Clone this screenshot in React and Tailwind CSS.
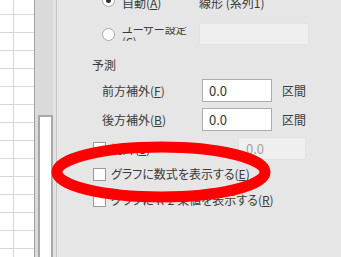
import React from "react";

const font = { fontFamily: '"Noto Sans CJK JP", "Noto Sans", sans-serif' };

function U({ c }) {
  return <span className="underline underline-offset-1">{c}</span>;
}

function Radio({ checked }) {
  return (
    <div className="w-[13px] h-[13px] rounded-full border border-[#a8a8a8] bg-white flex items-center justify-center shrink-0">
      {checked && <div className="w-[5px] h-[5px] rounded-full bg-[#333]" />}
    </div>
  );
}

function Check() {
  return <div className="w-[13px] h-[13px] border border-[#9a9a9a] bg-white shrink-0" />;
}

function Input({ value, disabled }) {
  return (
    <div
      className={
        disabled
          ? "w-[68px] h-[23px] border border-[#e2e2e2] bg-[#efefef] text-[#a2a2a2] flex items-center pl-[7px] text-[13px]"
          : "w-[70px] h-[23px] border border-[#acacac] bg-white text-[#333] flex items-center pl-[6px] text-[13px]"
      }
    >
      {value}
    </div>
  );
}

export default function App() {
  const rows = Array.from({ length: 14 });
  return (
    <div
      className="w-[341px] h-[257px] overflow-hidden flex relative bg-[#e6e6e6] text-[12px] text-[#3a3a3a] [font-feature-settings:'palt']"
      style={font}
    >
      {/* spreadsheet grid */}
      <div className="w-[34px] shrink-0 bg-white flex flex-col">
        <div className="h-[15px] shrink-0 border-b border-[#d6d6d6] flex">
          <div className="w-[14px] border-r border-[#d6d6d6]" />
        </div>
        {rows.map((_, i) => (
          <div key={i} className="h-[18px] shrink-0 border-b border-[#d6d6d6] flex">
            <div className="w-[14px] border-r border-[#d6d6d6]" />
          </div>
        ))}
      </div>
      {/* scrollbar */}
      <div className="w-[23px] shrink-0 flex border-l border-[#9f9f9f]">
        <div className="w-[18px] bg-[#dadada] flex flex-col pl-[3px]">
          <div className="h-[115px]" />
          <div className="w-[15px] flex-1 border-2 border-b-0 border-[#a8a8a8] bg-white" />
        </div>
        <div className="w-[3px] bg-[#e3e3e3]" />
        <div className="w-[1px] bg-[#c4c4c4]" />
      </div>
      {/* panel */}
      <div className="flex-1 relative">
        <div className="flex flex-col">
          <div className="flex items-start h-[14px] -mt-[4px] ml-[45px] leading-[14px]">
            <div className="-mt-[2px]">
              <Radio checked />
            </div>
            <span className="ml-[7px] w-[77px]">
              自動(<U c="A" />)
            </span>
            <span>線形 (系列1)</span>
          </div>
          <div className="flex items-center h-[22px] mt-[13px] ml-[45px]">
            <Radio />
            <div className="ml-[7px] w-[70px] h-[14px] overflow-hidden leading-[12px] text-[11px]">
              <div className="-mt-[4px] whitespace-nowrap">
                ユーザー設定
                <br />
                (<U c="C" />)
              </div>
            </div>
            <div className="ml-[7px] w-[110px] h-[22px] bg-[#efefef] border border-[#e3e3e3]" />
          </div>
          <div className="ml-[35px] mt-[13px] leading-[14px]">予測</div>
          <div className="flex items-center ml-[45px] mt-[7px]">
            <span className="w-[100px]">
              前方補外(<U c="F" />)
            </span>
            <Input value="0.0" />
            <span className="ml-[10px]">区間</span>
          </div>
          <div className="flex items-center ml-[45px] mt-[6px]">
            <span className="w-[100px]">
              後方補外(<U c="B" />)
            </span>
            <Input value="0.0" />
            <span className="ml-[10px]">区間</span>
          </div>
          <div className="flex items-center ml-[36px] mt-[6px] h-[23px]">
            <Check />
            <span className="ml-[5px] w-[127px]">
              切片(<U c="S" />)
            </span>
            <Input value="0.0" disabled />
          </div>
          <div className="flex items-center ml-[36px] mt-[4px] h-[20px]">
            <Check />
            <span className="ml-[5px]">
              グラフに数式を表示する(<U c="E" />)
            </span>
          </div>
          <div className="flex items-center ml-[36px] mt-[6px] h-[20px]">
            <Check />
            <span className="ml-[5px]">
              グラフに R-2 乗値を表示する(<U c="R" />)
            </span>
          </div>
        </div>
      </div>
      {/* red annotation */}
      <svg className="absolute left-0 top-0 pointer-events-none" width="341" height="257">
        <ellipse cx="161" cy="172" rx="104" ry="25" fill="none" stroke="#ff0000" strokeWidth="11" />
      </svg>
    </div>
  );
}
